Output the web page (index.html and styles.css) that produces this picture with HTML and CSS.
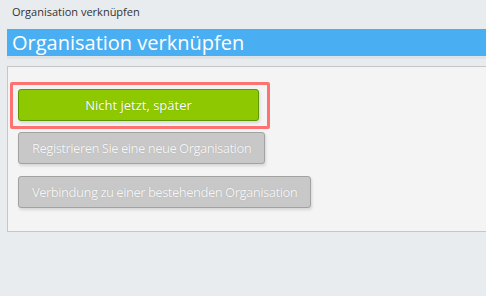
FILE: index.html
```html
<!DOCTYPE html>
<html lang="de">
<head>
  <meta charset="UTF-8">
  <title>Organisation verknüpfen</title>
  <link rel="stylesheet" href="styles.css">
</head>
<body>
  <div class="crumb">Organisation verknüpfen</div>
  <h1 class="title-bar">Organisation verknüpfen</h1>
  <div class="panel">
    <div class="highlight">
      <button class="btn btn-green">Nicht jetzt, später</button>
    </div>
    <button class="btn btn-gray">Registrieren Sie eine neue Organisation</button>
    <button class="btn btn-gray">Verbindung zu einer bestehenden Organisation</button>
  </div>
</body>
</html>
```
FILE: styles.css
```css
body {
  background-color: #e9ecef;
  color: #333;
  font-family: "Open Sans", sans-serif;
  margin: 0;
}
.crumb {
  font-size: 11px;
  height: 29px;
  line-height: 24px;
  padding-left: 12px;
}
.title-bar {
  background-color: #4aaff2;
  border-bottom: 3px solid #dde2e7;
  color: #fff;
  font-size: 20px;
  font-weight: normal;
  height: 27px;
  line-height: 27px;
  margin: 0 0 0 7px;
  padding-left: 5px;
}
.panel {
  align-items: flex-start;
  background-color: #f4f4f4;
  border: 1px solid #c6c6c6;
  border-right: none;
  box-shadow: 0 1px 0 #d3d6da;
  display: flex;
  flex-direction: column;
  height: 149px;
  margin: 7px 0 0 7px;
  padding: 15px 0 0 2px;
}
.highlight {
  border: 3px solid #ff7272;
  border-radius: 2px;
  padding: 4px 8px 5px 5px;
}
.btn {
  border-radius: 3px;
  box-shadow: 1px 2px 3px rgba(0, 0, 0, 0.12);
  color: #fff;
  font-family: "Open Sans", sans-serif;
  font-size: 13px;
  height: 32px;
  padding: 0 13px;
}
.btn-green {
  background-color: #8dc800;
  border: 1px solid #5f9800;
  display: block;
  text-shadow: 0 0 1px rgba(0, 0, 0, 0.25);
  width: 241px;
}
.btn-gray {
  background-color: #c8c8c8;
  border: 1px solid #a2a2a2;
  color: #f5f5f5;
  letter-spacing: -0.5px;
  margin: 3px 0 9px 8px;
  text-shadow: 0 0 1px rgba(0, 0, 0, 0.2);
}
```
